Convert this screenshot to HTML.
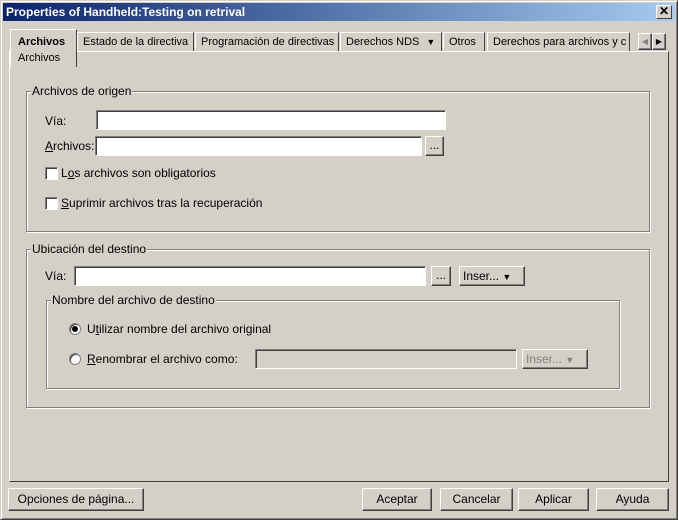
<!DOCTYPE html>
<html><head><meta charset="utf-8"><style>
*{box-sizing:border-box}
body{margin:0;width:678px;height:520px;background:#d4d0c8;font-family:"Liberation Sans",sans-serif;font-size:12px;color:#000;position:relative;overflow:hidden}
.a{position:absolute}
.win{left:0;top:0;width:678px;height:520px;border:1px solid;border-color:#d4d0c8 #404040 #404040 #d4d0c8;box-shadow:inset 1px 1px #fff,inset -1px -1px #808080}
.title{left:3px;top:3px;width:672px;height:18px;background:linear-gradient(90deg,#0a246a,#a6caf0);color:#fff;font-weight:bold;font-size:12px;line-height:18px;padding-left:3px}
.close{left:656px;top:5px;width:16px;height:14px;background:#d4d0c8;border:1px solid;border-color:#fff #404040 #404040 #fff;font-size:12px;line-height:11px;text-align:center;font-weight:bold;color:#000}
.tab{top:32px;height:19px;border:1px solid;border-color:#fff #404040 transparent #fff;border-bottom:none;padding:3px 5px;white-space:nowrap;overflow:hidden;line-height:13px;font-size:11px}
.panel{left:9px;top:51px;width:660px;height:431px;border:1px solid;border-color:#fff #404040 #404040 #fff}
.grp{border:1px solid #808080;box-shadow:1px 1px #fff,inset 1px 1px #fff}
.leg{background:#d4d0c8;padding:0 1px;line-height:14px}
.inp{background:#fff;border:1px solid;border-color:#808080 #fff #fff #808080;box-shadow:inset 1px 1px #404040}
.btn{background:#d4d0c8;border:1px solid;border-color:#fff #404040 #404040 #fff;box-shadow:inset -1px -1px #808080;text-align:center;line-height:21px}
.cb{width:13px;height:13px;background:#fff;border:1px solid;border-color:#808080 #fff #fff #808080;box-shadow:inset 1px 1px #404040}
.rd{width:12px;height:12px;border-radius:50%;background:#fff;border:1px solid #808080;box-shadow:inset 1px 1px #404040}
u{text-decoration:underline}
</style></head><body>
<div class="a win"></div>
<div class="a title">Properties of Handheld:Testing on retrival</div>
<div class="a close">✕</div>

<div class="a panel"></div>
<div class="a tab" style="left:10px;top:29px;width:67px;height:38px;background:#d4d0c8;z-index:2;line-height:16px;padding:4px 7px"><b>Archivos</b><br>Archivos</div>
<div class="a tab" style="left:77px;width:117px">Estado de la directiva</div>
<div class="a tab" style="left:195px;width:144px">Programación de directivas</div>
<div class="a tab" style="left:340px;width:102px">Derechos NDS <span style="font-size:9px;margin-left:4px">▼</span></div>
<div class="a tab" style="left:443px;width:42px">Otros</div>
<div class="a tab" style="left:487px;width:143px">Derechos para archivos y c</div>
<div class="a btn" style="left:638px;top:33px;width:14px;height:17px;font-size:8px;line-height:15px;color:#808080">◀</div>
<div class="a btn" style="left:652px;top:33px;width:14px;height:17px;font-size:8px;line-height:15px">▶</div>

<div class="a grp" style="left:26px;top:91px;width:624px;height:141px"></div>
<div class="a leg" style="left:31px;top:84px">Archivos de origen</div>
<div class="a" style="left:45px;top:114px">Vía:</div>
<div class="a inp" style="left:96px;top:110px;width:350px;height:20px"></div>
<div class="a" style="left:45px;top:139px"><u>A</u>rchivos:</div>
<div class="a inp" style="left:95px;top:136px;width:327px;height:20px"></div>
<div class="a btn" style="left:425px;top:136px;width:19px;height:20px;line-height:16px">...</div>
<div class="a cb" style="left:45px;top:167px"></div>
<div class="a" style="left:61px;top:166px">L<u>o</u>s archivos son obligatorios</div>
<div class="a cb" style="left:45px;top:197px"></div>
<div class="a" style="left:61px;top:196px"><u>S</u>uprimir archivos tras la recuperación</div>

<div class="a grp" style="left:26px;top:249px;width:624px;height:159px"></div>
<div class="a leg" style="left:31px;top:242px">Ubicación del destino</div>
<div class="a" style="left:45px;top:269px">Vía:</div>
<div class="a inp" style="left:74px;top:266px;width:352px;height:20px"></div>
<div class="a btn" style="left:431px;top:266px;width:20px;height:20px;line-height:16px">...</div>
<div class="a btn" style="left:459px;top:266px;width:66px;height:20px;text-align:left;padding-left:3px;line-height:19px">Inser... <span style="font-size:9px">▼</span></div>

<div class="a grp" style="left:46px;top:300px;width:574px;height:89px"></div>
<div class="a leg" style="left:51px;top:293px">Nombre del archivo de destino</div>
<div class="a rd" style="left:69px;top:323px"></div>
<div class="a" style="left:72px;top:326px;width:6px;height:6px;border-radius:50%;background:#000"></div>
<div class="a" style="left:87px;top:322px">U<u>t</u>ilizar nombre del archivo original</div>
<div class="a rd" style="left:69px;top:353px"></div>
<div class="a" style="left:87px;top:352px"><u>R</u>enombrar el archivo como:</div>
<div class="a inp" style="left:255px;top:349px;width:262px;height:20px;background:#d4d0c8"></div>
<div class="a btn" style="left:522px;top:349px;width:66px;height:20px;text-align:left;padding-left:3px;color:#808080;line-height:19px">Inser... <span style="font-size:9px">▼</span></div>

<div class="a btn" style="left:8px;top:488px;width:136px;height:23px">Opciones de página...</div>
<div class="a btn" style="left:362px;top:488px;width:70px;height:23px">Aceptar</div>
<div class="a btn" style="left:440px;top:488px;width:73px;height:23px">Cancelar</div>
<div class="a btn" style="left:518px;top:488px;width:71px;height:23px">Aplicar</div>
<div class="a btn" style="left:596px;top:488px;width:73px;height:23px">Ayuda</div>
</body></html>
